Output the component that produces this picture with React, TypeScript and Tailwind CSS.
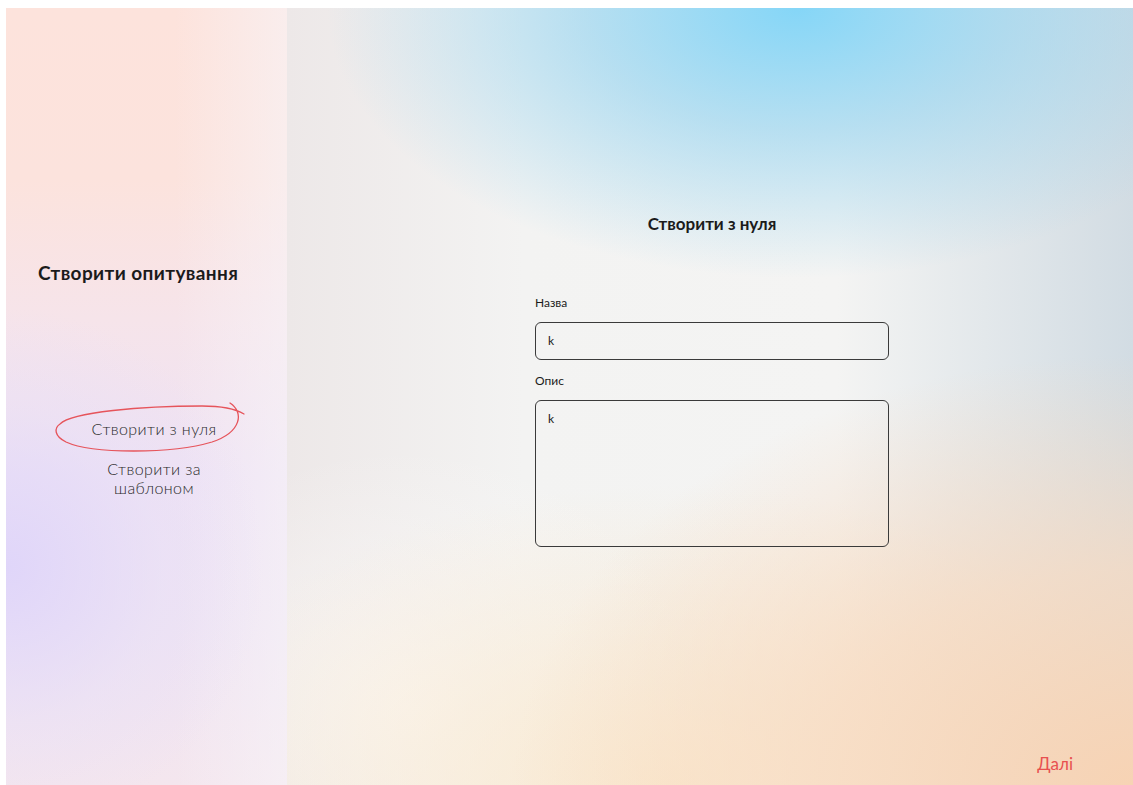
import React from "react";

function ScribbleCircle() {
  return (
    <svg
      className="pointer-events-none absolute left-[-40px] top-[-21px] h-[60px] w-[200px]"
      viewBox="0 0 200 60"
      fill="none"
    >
      <path
        d="M178 5 C192 14, 190 34, 160 44 C120 56, 40 56, 14 44 C2 38, 2 30, 8 26 C20 14, 90 8, 150 8 C170 8, 182 10, 192 16"
        stroke="#e6545b"
        strokeWidth="1.3"
        strokeLinecap="round"
      />
    </svg>
  );
}

export default function App() {
  return (
    <div
      className="h-[785px] w-[1133px] bg-white pl-[6px] pt-[8px] text-[#1b1b1b]"
      style={{ fontFamily: "Lato, 'Noto Sans', sans-serif" }}
    >
      <div className="flex h-full w-full">
        {/* sidebar */}
        <aside className="flex h-full w-[281px] shrink-0 flex-col bg-[radial-gradient(ellipse_260px_260px_at_0px_560px,rgba(222,212,250,0.9)_0%,rgba(230,222,248,0.4)_60%,rgba(255,255,255,0)_100%),linear-gradient(to_right,rgba(255,255,255,0)_0%,rgba(255,255,255,0)_60%,rgba(247,244,248,0.6)_100%),linear-gradient(to_bottom,#fde3dc_0%,#fce3dd_22%,#f6e4ea_40%,#eee2f4_60%,#efe4f3_80%,#f4e6ee_100%)]">
          <h1 className="pl-[32px] pt-[253px] text-[19px] font-bold leading-[24px] tracking-[0.4px]">
            Створити опитування
          </h1>
          <nav className="ml-[42px] mt-[134px] flex w-[212px] flex-col items-center text-[16px] font-light leading-[19px] tracking-[0.4px] text-[#2a2a2a]">
            <div className="relative">
              <span>Створити з нуля</span>
              <ScribbleCircle />
            </div>
            <div className="mt-[21px] text-center">
              Створити за
              <br />
              шаблоном
            </div>
          </nav>
        </aside>

        {/* main form area */}
        <main className="relative flex h-full flex-1 flex-col bg-[radial-gradient(ellipse_470px_270px_at_510px_0px,#85d6f7_0%,rgba(150,212,240,0.65)_45%,rgba(255,255,255,0)_100%),radial-gradient(ellipse_620px_430px_at_846px_777px,#f7d3b4_0%,rgba(248,218,192,0.75)_50%,rgba(255,255,255,0)_100%),radial-gradient(ellipse_520px_300px_at_380px_777px,rgba(250,232,204,0.9)_0%,rgba(255,255,255,0)_100%),radial-gradient(ellipse_300px_260px_at_120px_700px,rgba(250,248,247,0.9)_0%,rgba(255,255,255,0)_100%),linear-gradient(to_right,#ede8e8_0%,#f3f3f2_28%,#f4f4f3_65%,#d2dce3_100%)]">
          <div className="ml-[248px] flex w-[354px] flex-col pt-[206px]">
            <h2 className="text-center text-[17px] font-bold leading-[20px]">
              Створити з нуля
            </h2>
            <label className="mt-[61px] text-[12px] leading-[16px]">Назва</label>
            <div className="mt-[11px] flex h-[38px] items-center rounded-[6px] border-[1.5px] border-[#3a3a3a] px-[12px] text-[12px]">
              k
            </div>
            <label className="mt-[13px] text-[12px] leading-[16px]">Опис</label>
            <div className="mt-[11px] h-[147px] rounded-[6px] border-[1.5px] border-[#3a3a3a] px-[12px] pt-[11px] text-[12px] leading-[14px]">
              k
            </div>
          </div>
          <div className="mt-auto flex justify-end pb-[10px] pr-[60px]">
            <button className="text-[17px] leading-[22px] text-[#e8504f]">Далі</button>
          </div>
        </main>
      </div>
    </div>
  );
}
